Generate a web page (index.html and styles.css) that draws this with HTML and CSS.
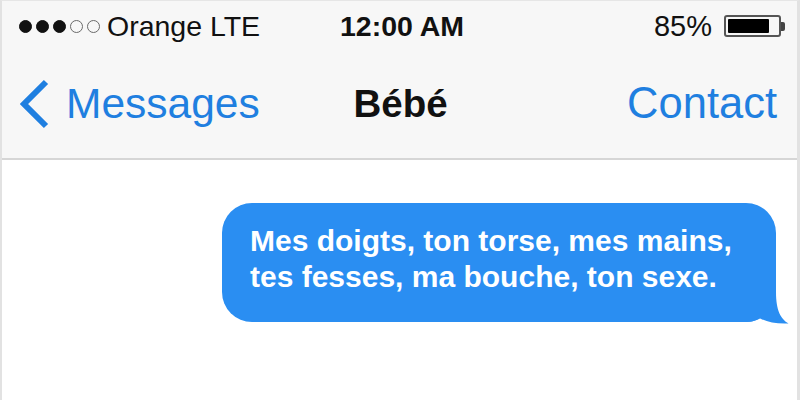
FILE: index.html
```html
<!DOCTYPE html>
<html lang="fr">
<head>
<meta charset="utf-8">
<title>Bébé</title>
<link rel="stylesheet" href="styles.css">
</head>
<body>
<div class="screen">
  <div class="status">
    <div class="status-left">
      <span class="signal">
        <span class="dot on"></span><span class="dot on"></span><span class="dot on"></span><span class="dot"></span><span class="dot"></span>
      </span>
      <span class="carrier">Orange LTE</span>
    </div>
    <div class="status-time">12:00 AM</div>
    <div class="status-right">
      <span class="pct">85%</span>
      <span class="battery"><span class="battery-fill"></span></span><span class="battery-tip"></span>
    </div>
  </div>
  <div class="nav">
    <div class="nav-back">
      <svg class="chevron" viewBox="0 0 30 50" width="30" height="50" aria-hidden="true">
        <polyline points="26,3 4,25 26,47" fill="none" stroke="#1f7fe0" stroke-width="6" stroke-linecap="butt" stroke-linejoin="miter"/>
      </svg>
      <span class="nav-link">Messages</span>
    </div>
    <div class="nav-title">Bébé</div>
    <div class="nav-right"><span class="nav-link contact">Contact</span></div>
  </div>
  <div class="content">
    <div class="bubble">
      <p class="bubble-text">Mes doigts, ton torse, mes mains,<br>tes fesses, ma bouche, ton sexe.</p>
      <svg class="tail" viewBox="0 0 46 46" width="46" height="46" aria-hidden="true">
        <path d="M3 44 C9 44 13 42.5 16.5 40 C23 44 33 46 45.5 45.5 C38 41 33 33 33 14 L3 14 Z" fill="#2a8ef2"/>
      </svg>
    </div>
  </div>
</div>
</body>
</html>
```

FILE: styles.css
```css
* { box-sizing: border-box; }
html, body { margin: 0; padding: 0; }
body {
  width: 800px;
  height: 400px;
  overflow: hidden;
  background: #fff;
  font-family: "Liberation Sans", Arial, sans-serif;
}
.screen {
  width: 800px;
  height: 400px;
  display: flex;
  flex-direction: column;
  border-left: 2px solid #e2e2e2;
  border-right: 3px solid #e2e2e2;
  border-top: 1px solid #e6e6e6;
}
.status {
  height: 55px;
  flex: none;
  background: #f7f7f7;
  display: grid;
  grid-template-columns: 1fr auto 1fr;
  align-items: center;
  padding: 0 12px 5px 17px;
  color: #111;
  font-size: 28.5px;
}
.status-left { display: flex; align-items: center; }
.signal { display: flex; gap: 4px; margin-right: 7px; }
.dot {
  width: 13px; height: 13px; border-radius: 50%;
  border: 1.5px solid #6a6a6a;
}
.dot.on { background: #111; border-color: #111; }
.status-time { font-weight: bold; font-size: 28.5px; }
.status-right { display: flex; align-items: center; justify-content: flex-end; }
.pct { font-size: 29px; margin-right: 12px; }
.battery {
  width: 57px; height: 22px;
  border: 2px solid #555;
  border-radius: 3px;
  padding: 2px;
  display: flex;
}
.battery-fill { width: 84%; background: #000; border-radius: 1px; }
.battery-tip { width: 4px; height: 9px; background: #444; border-radius: 0 2px 2px 0; }
.nav {
  height: 104px;
  flex: none;
  background: #f7f7f7;
  border-bottom: 2px solid #d6d6d6;
  display: grid;
  grid-template-columns: 1fr auto 1fr;
  align-items: center;
  padding: 0 20px 6px 18px;
}
.nav-back { display: flex; align-items: center; }
.chevron { margin-right: 16px; }
.nav-link { color: #1f7fe0; font-size: 42.5px; line-height: 1; }
.contact { font-size: 43.5px; }
.nav-title { font-weight: bold; font-size: 38.5px; line-height: 1; color: #111; margin-left: 4px; }
.nav-right { display: flex; justify-content: flex-end; }
.content {
  flex: 1;
  background: #fff;
  display: flex;
  justify-content: flex-end;
  align-items: flex-start;
  padding: 43px 21px 0 0;
}
.bubble {
  position: relative;
  width: 554px;
  height: 119px;
  background: #2a8ef2;
  border-radius: 30px;
  padding: 20px 20px 0 28px;
}
.bubble-text {
  margin: 0;
  color: #fff;
  font-weight: bold;
  font-size: 30px;
  line-height: 36px;
}
.tail {
  position: absolute;
  right: -13px;
  bottom: -2px;
}
```
